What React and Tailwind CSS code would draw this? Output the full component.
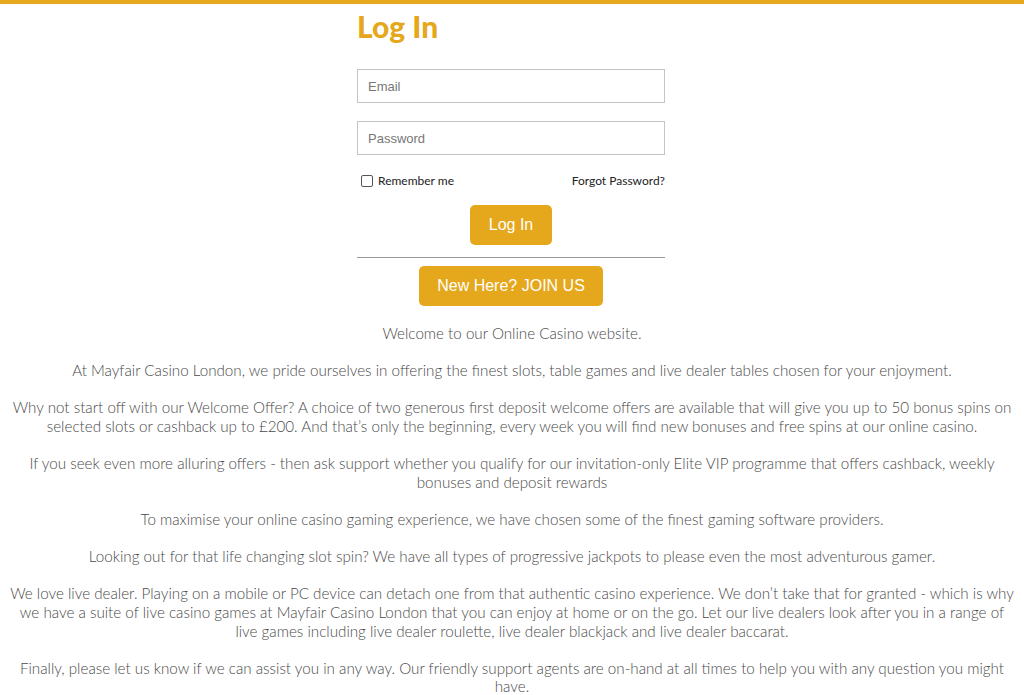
import React from 'react';

const paragraphs = [
  'Welcome to our Online Casino website.',
  'At Mayfair Casino London, we pride ourselves in offering the finest slots, table games and live dealer tables chosen for your enjoyment.',
  'Why not start off with our Welcome Offer? A choice of two generous first deposit welcome offers are available that will give you up to 50 bonus spins on selected slots or cashback up to £200. And that’s only the beginning, every week you will find new bonuses and free spins at our online casino.',
  'If you seek even more alluring offers - then ask support whether you qualify for our invitation-only Elite VIP programme that offers cashback, weekly bonuses and deposit rewards',
  'To maximise your online casino gaming experience, we have chosen some of the finest gaming software providers.',
  'Looking out for that life changing slot spin? We have all types of progressive jackpots to please even the most adventurous gamer.',
  'We love live dealer. Playing on a mobile or PC device can detach one from that authentic casino experience. We don’t take that for granted - which is why we have a suite of live casino games at Mayfair Casino London that you can enjoy at home or on the go. Let our live dealers look after you in a range of live games including live dealer roulette, live dealer blackjack and live dealer baccarat.',
  'Finally, please let us know if we can assist you in any way. Our friendly support agents are on-hand at all times to help you with any question you might have.',
];

const App = () => {
  return (
    <div className="min-h-[695px] bg-white border-t-4 border-[#e5a81c]" style={{ fontFamily: 'Lato, "Noto Sans", sans-serif' }}>
      <div className="w-[308px] mx-auto -translate-x-px">
        <h1 className="text-[30px] font-black text-[#e5a81c] leading-[40px] pt-[2px]">Log In</h1>

        <form className="mt-[23px]" onSubmit={e => e.preventDefault()}>
          <input
            type="email"
            placeholder="Email"
            className="block w-full h-[34px] border border-[#c4c4c4] px-[10px] text-[13px] placeholder:text-[#777] outline-none"
            style={{ fontFamily: '"Liberation Sans", Arial, sans-serif' }}
          />
          <input
            type="password"
            placeholder="Password"
            className="block w-full h-[34px] border border-[#c4c4c4] px-[10px] text-[13px] placeholder:text-[#777] outline-none mt-[18px]"
            style={{ fontFamily: '"Liberation Sans", Arial, sans-serif' }}
          />

          <div className="flex justify-between items-center mt-[17px] text-[12px] text-[#222]">
            <label className="flex items-center gap-[5px] pl-[4px]">
              <span className="w-[12px] h-[12px] border border-[#555] rounded-[2px] bg-white"></span>
              Remember me
            </label>
            <a href="#" className="text-[#222]">Forgot Password?</a>
          </div>

          <div className="flex justify-center mt-[15px]">
            <button type="submit" className="w-[82px] h-[40px] rounded-[5px] bg-[#e5a81c] text-white text-[16px]" style={{ fontFamily: '"Liberation Sans", Arial, sans-serif' }}>
              Log In
            </button>
          </div>

          <hr className="border-0 border-t border-[#999] mt-[12px]" />

          <div className="flex justify-center mt-[8px]">
            <button type="button" className="w-[184px] h-[40px] rounded-[5px] bg-[#e5a81c] text-white text-[16px]" style={{ fontFamily: '"Liberation Sans", Arial, sans-serif' }}>
              New Here? JOIN US
            </button>
          </div>
        </form>
      </div>

      <div className="mt-[18px] px-[10px] text-center text-[15.2px] leading-[18.6px] font-light text-[#4a4a4a]">
        {paragraphs.map((p, i) => (
          <p key={i} className="mb-[18.6px]">{p}</p>
        ))}
      </div>
    </div>
  );
};

export default App;
